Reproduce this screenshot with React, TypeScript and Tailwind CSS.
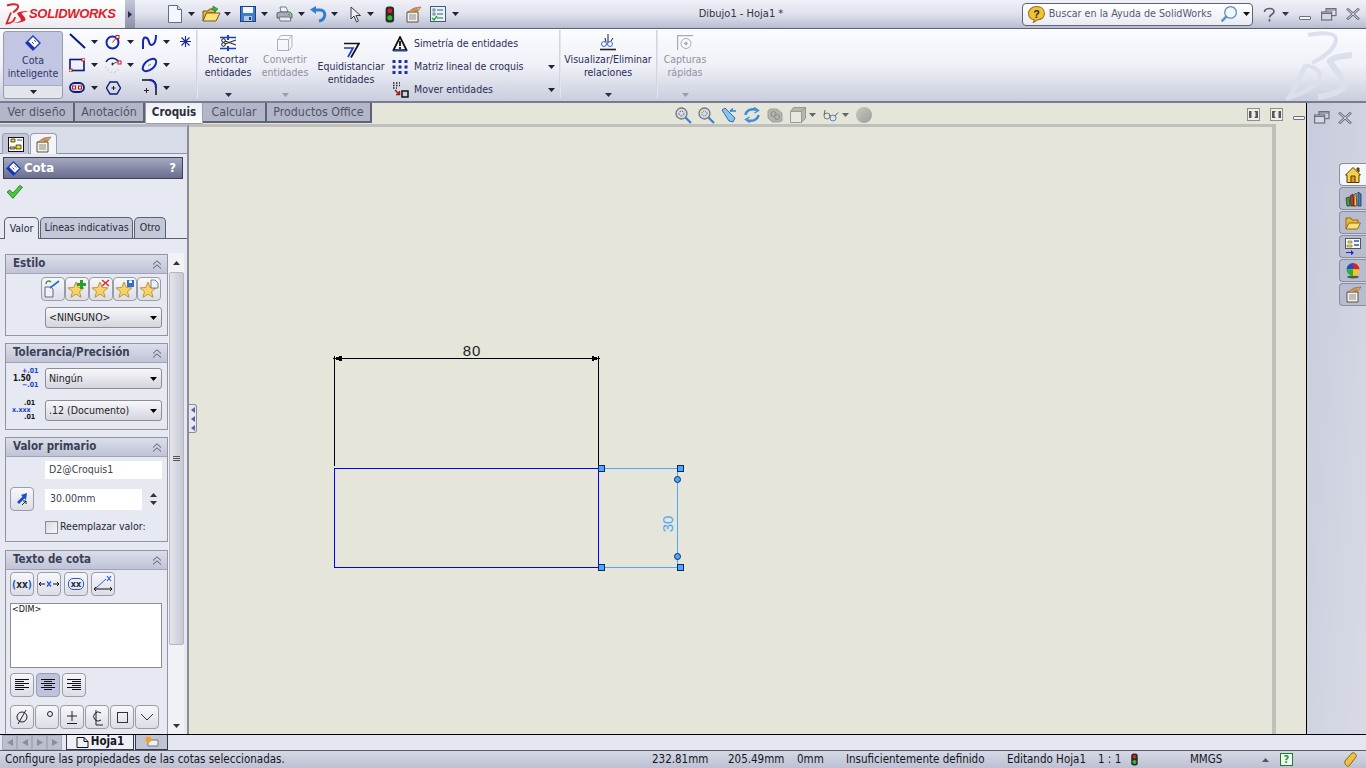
import React from 'react';

const Caret = ({ color = '#1f2333', className = '' }: { color?: string; className?: string }) => (
    <svg width="7" height="4" viewBox="0 0 7 4" className={className}>
        <path d="M0 0h7L3.5 4z" fill={color} />
    </svg>
);

const Logo3DS = () => (
    <svg width="26" height="22" viewBox="0 0 26 22" fill="none" stroke="#d8232a" strokeWidth="2">
        <path d="M4 2.5c5-1.700 10-1.700 11 0 1 1.500-1 4.500-5 7" />
        <path d="M8 9.5 3.500 20.500c5 0 8-2 8.500-6.500" strokeWidth="1.800" />
        <path d="M14 10c3-1.500 10-2.500 11-1.500-2 .2-6 1-6.500 2 1 1.500 4 4 4 6 0 2.500-9 4-14 3.500 4 0 9.500-1.500 9.500-3 0-1.500-3-4-4-7z" fill="#d8232a" stroke="none" />
    </svg>
);

const DocNew = () => (
    <svg width="16" height="18" viewBox="0 0 16 18">
        <path d="M1.5.5h9l4 4v13h-13z" fill="#f4f8fd" stroke="#5b7088" />
        <path d="M10.5.5v4h4" fill="#cfdcea" stroke="#5b7088" />
    </svg>
);
const FolderOpen = () => (
    <svg width="19" height="18" viewBox="0 0 19 18">
        <path d="M1 6h5l1.500-2H13v4H5L1 16z" fill="#e0b840" stroke="#7a5b10" />
        <path d="M1 16l3.500-8H18l-4 8z" fill="#fbe27b" stroke="#7a5b10" />
        <path d="M11 1l5 3-3 3V5h-3V3h1z" fill="#37b34a" stroke="#1d7a2b" strokeWidth=".6" />
    </svg>
);
const Save = () => (
    <svg width="16" height="16" viewBox="0 0 16 16">
        <rect x=".5" y=".5" width="15" height="15" fill="#3f7fc8" stroke="#1d3f86" />
        <rect x="3" y="1" width="10" height="6" fill="#f3f6fb" />
        <rect x="4" y="10" width="8" height="5" fill="#b9c8dc" />
        <rect x="9" y="11" width="2" height="3" fill="#1d3f86" />
    </svg>
);
const Printer = () => (
    <svg width="17" height="16" viewBox="0 0 17 16">
        <path d="M4 1h6l2 5H5z" fill="#f4f5f7" stroke="#5c6470" strokeWidth=".8" />
        <path d="M1 7l3-1h10l2 2v4H1z" fill="#a6adb8" stroke="#4a5058" strokeWidth=".8" />
        <path d="M3 11h11l1 4H4z" fill="#e8eaee" stroke="#5c6470" strokeWidth=".8" />
        <rect x="12" y="8" width="2" height="1.5" fill="#3c4" />
    </svg>
);
const Undo = () => (
    <svg width="18" height="17" viewBox="0 0 18 17" fill="none">
        <path d="M5 4h6c7 0 6 10-1 11" stroke="#2f7fd0" strokeWidth="3" />
        <path d="M1 3.5 7 0v8z" fill="#2f7fd0" />
    </svg>
);
const Pointer = () => (
    <svg width="12" height="17" viewBox="0 0 12 17">
        <path d="M1 1v12l3-3 2.500 6 2-1-2.500-5.500h4.500z" fill="#eceef4" stroke="#3a3f4a" />
    </svg>
);
const Light = ({ h = 16 }: { h?: number }) => (
    <svg width={(h * 11) / 16} height={h} viewBox="0 0 11 16">
        <rect x="1.5" y=".5" width="8" height="15" rx="3" fill="#2b2b2b" />
        <circle cx="5.5" cy="4.5" r="2.2" fill="#e02020" />
        <circle cx="5.5" cy="11" r="2.4" fill="#28c030" />
    </svg>
);
const Options = () => (
    <svg width="17" height="17" viewBox="0 0 17 17">
        <path d="M2 6h11v10H2z" fill="#f6f2e6" stroke="#55524a" />
        <path d="M4 9h7M4 11h7M4 13h7" stroke="#888" />
        <path d="M3 6l6-4 7-1-3 4-5 1z" fill="#e4a868" stroke="#8a5a2a" strokeWidth=".6" />
        <path d="M6 4l6-1.500M8 5l5-1" stroke="#a56c34" strokeWidth=".6" />
    </svg>
);
const Checklist = () => (
    <svg width="16" height="16" viewBox="0 0 16 16">
        <rect x=".5" y=".5" width="15" height="15" fill="#e8f2f4" stroke="#3f5d78" />
        <path d="M7 4h6M7 8h6M7 12h6" stroke="#3f5d78" />
        <rect x="3" y="3" width="2" height="2" fill="none" stroke="#3f5d78" strokeWidth=".7" />
        <rect x="3" y="7" width="2" height="2" fill="none" stroke="#3f5d78" strokeWidth=".7" />
        <path d="M2 12l2 2 3-4" fill="none" stroke="#20a030" strokeWidth="1.3" />
    </svg>
);

const RedDot = ({ x, y }: { x: number; y: number }) => <rect x={x} y={y} width="3" height="3" fill="#fff" stroke="#c01818" />;

const T = { blue: '#1426b4' };

const LineTool = () => (
    <svg width="17" height="17" viewBox="0 0 17 17"><path d="M1 1l15 14" stroke="#0a1a78" strokeWidth="2" /></svg>
);
const CircleTool = () => (
    <svg width="16" height="16" viewBox="0 0 16 16" fill="none">
        <circle cx="7.5" cy="8.5" r="6" stroke={T.blue} strokeWidth="2" />
        <path d="M7.5 8.5 12 3" stroke="#c01818" />
        <RedDot x={11} y={1.5} />
    </svg>
);
const SplineTool = () => (
    <svg width="17" height="16" viewBox="0 0 17 16" fill="none">
        <path d="M2 15V8c0-7 5-5 6 0s7 4 7-7" stroke={T.blue} strokeWidth="2" />
    </svg>
);
const RectTool = () => (
    <svg width="16" height="14" viewBox="0 0 16 14" fill="none">
        <rect x="1" y="1.5" width="14" height="11" stroke="#0a1a78" strokeWidth="1.6" />
        <RedDot x={13} y={0} />
        <RedDot x={0} y={11} />
    </svg>
);
const ArcTool = () => (
    <svg width="17" height="16" viewBox="0 0 17 16" fill="none">
        <path d="M1 5c3-5 9-5 13 0" stroke="#0a1a78" strokeWidth="1.4" />
        <path d="M1 10l.1.1M3 13l.1.1M6 15l.1.1M10 15l.1.1M13 13l.1.1" stroke="#000" strokeWidth="1.5" />
        <path d="M6 7h3M7.5 5.500v3M7.5 7 12 5" stroke="#222" strokeWidth=".8" />
        <RedDot x={13} y={4} />
    </svg>
);
const EllipseTool = () => (
    <svg width="17" height="16" viewBox="0 0 17 16" fill="none">
        <ellipse cx="8.5" cy="8" rx="8" ry="4.5" transform="rotate(-40 8.5 8)" stroke={T.blue} strokeWidth="2" />
        <path d="M7 9l3-2" stroke="#888" />
    </svg>
);
const SlotTool = () => (
    <svg width="16" height="11" viewBox="0 0 16 11" fill="none">
        <rect x="1" y="1" width="14" height="9" rx="4.5" stroke="#0a1a78" strokeWidth="1.8" />
        <RedDot x={3.5} y={4} />
        <RedDot x={9.5} y={4} />
    </svg>
);
const PolyTool = () => (
    <svg width="15" height="14" viewBox="0 0 15 14" fill="none">
        <path d="M4 1h7l3.500 6L11 13H4L.5 7z" stroke="#0a1a78" strokeWidth="1.4" />
        <path d="M5.5 7h4M7.5 5v4" stroke="#222" />
    </svg>
);
const FilletTool = () => (
    <svg width="17" height="17" viewBox="0 0 17 17" fill="none">
        <path d="M1 1h8c4 0 6 3 6 7v8" stroke="#111" strokeWidth="1.5" />
        <path d="M8 1c4 0 7 3 7 8" stroke={T.blue} strokeWidth="2" />
        <path d="M3 11.5h5M5.5 9v5" stroke="#222" />
    </svg>
);
const StarTool = () => (
    <svg width="11" height="11" viewBox="0 0 11 11" stroke={T.blue} strokeWidth="1.1">
        <path d="M5.5 0v11M0 5.500h11M1.5 1.500l8 8M9.5 1.500l-8 8" />
    </svg>
);

const SmartDim = ({ s = 16 }: { s?: number }) => (
    <svg width={s} height={s} viewBox="0 0 16 16">
        <path d="M8 1l7 7-7 7-7-7z" fill="#fff" stroke="#1a3fc8" strokeWidth="1.4" />
        <path d="M1 8l7 7 2-2-7-7z" fill="#1a2fb8" />
        <path d="M7 7l2 2M9 5l2 2" stroke="#333" strokeWidth=".8" />
    </svg>
);
const Trim = () => (
    <svg width="17" height="16" viewBox="0 0 17 16" fill="none">
        <path d="M8 0v5M8 11v5" stroke="#1a3fc8" strokeWidth="2" />
        <path d="M0 2.5h16M0 13.500h16" stroke="#1a3fc8" strokeWidth="1.4" />
        <path d="M16 5 5 9M16 10 5 6" stroke="#333" strokeWidth="1.2" />
        <circle cx="3.5" cy="5.5" r="1.8" stroke="#111" />
        <circle cx="3.5" cy="9.5" r="1.8" stroke="#111" />
    </svg>
);
const Convert = () => (
    <svg width="16" height="16" viewBox="0 0 16 16" fill="none" stroke="#aeb1bb">
        <path d="M.5 4.500 4 .5h11v11l-3 4H.5zM.5 4.500h11v11M11.500 4.500l3.500-4" />
    </svg>
);
const Offset = () => (
    <svg width="17" height="17" viewBox="0 0 17 17" fill="none">
        <path d="M1 1.5h15l-8 14" stroke="#111" strokeWidth="1.7" />
        <path d="M1 6h9l-5 9" stroke="#1a3fc8" strokeWidth="1.7" />
    </svg>
);
const Mirror = () => (
    <svg width="16" height="16" viewBox="0 0 16 16">
        <path d="M8 1l6.500 13h-13z" fill="#f5f5f5" stroke="#111" strokeWidth="1.7" />
        <path d="M8 5v5M8 11v2" stroke="#111" strokeWidth="1.8" />
        <path d="M1 15h14" stroke="#1a3fc8" strokeWidth="1" />
    </svg>
);
const Pattern = () => (
    <svg width="16" height="16" viewBox="0 0 16 16" fill="#1a2fa8">
        {[1, 6.5, 12].map(y => [0.5, 6.5, 12.5].map(x => <rect key={`${x}-${y}`} x={x} y={y} width="3" height="3" />))}
    </svg>
);
const MoveEnt = () => (
    <svg width="17" height="16" viewBox="0 0 17 16" fill="none">
        <path d="M1 1h7M1 3.500h7M1 6h4" stroke="#222" strokeWidth="1.3" strokeDasharray="1.5 1.5" />
        <path d="M3 8l4 4M4 12.500h3.500V9" stroke="#a01818" strokeWidth="1.5" />
        <rect x="10" y="9" width="6" height="6" stroke="#111" strokeWidth="1.5" />
    </svg>
);
const Relations = () => (
    <svg width="16" height="17" viewBox="0 0 16 17" fill="none" stroke="#222">
        <path d="M0 15.500h16" strokeWidth="1.6" />
        <path d="M8 0v9M5 4l1 4M13 4l-2 3" />
        <circle cx="4" cy="10" r="2.5" stroke="#3a6bd0" />
        <circle cx="10" cy="10" r="2.5" stroke="#3a6bd0" />
    </svg>
);
const Snapshot = () => (
    <svg width="16" height="16" viewBox="0 0 16 16" fill="none" stroke="#a8abb5">
        <path d="M.5 15V.5H16" strokeWidth="1.4" />
        <circle cx="9" cy="8.5" r="5" />
        <circle cx="9" cy="8.5" r="1.3" fill="#a8abb5" />
    </svg>
);

const ToolCell = ({ icon, wide = true }: { icon: React.ReactNode; wide?: boolean }) => (
    <div className="flex items-center w-[36px] h-[23px]">
        <div className="w-[18px] flex justify-center">{icon}</div>
        {wide && <Caret className="ml-[5px]" />}
    </div>
);

const BigButton = ({ icon, lines, w, disabled, ml }: { icon: React.ReactNode; lines: string[]; w: string; disabled?: boolean; ml: string }) => (
    <div className={`${w} ${ml} flex flex-col items-center h-[70px] pt-[5px] ${disabled ? 'text-[#8f929e]' : 'text-[#2a2f55]'}`}>
        <div className="h-[17px] flex items-center">{icon}</div>
        <div className="mt-[2px] text-center leading-[13px]">
            {lines.map(l => <div key={l} className="whitespace-nowrap">{l}</div>)}
        </div>
        <Caret className="mt-auto mb-[2px]" color={disabled ? '#9a9ca8' : '#2b2f48'} />
    </div>
);

const Sep = ({ ml }: { ml: string }) => <div className={`${ml} w-[2px] h-[68px] mt-[1px] bg-[#e3e5ee] border-l border-[#d3d6e2]`} />;

const ListRow = ({ icon, label, caret }: { icon: React.ReactNode; label: string; caret?: boolean }) => (
    <div className="flex items-center h-[23px] text-[#2a2f55]">
        <div className="w-[18px] flex justify-center">{icon}</div>
        <span className="ml-[5px] whitespace-nowrap">{label}</span>
        {caret && <Caret className="ml-auto mr-[2px]" />}
    </div>
);

const WinMin = () => <div className="w-[12px] h-[4px] mt-[8px] border border-[#6c7080] bg-[#f2f3f7] rounded-[1px]" />;
const WinRestore = () => (
    <svg width="16" height="13" viewBox="0 0 16 13" fill="none" stroke="#6c7080" strokeWidth="1.2">
        <rect x="5" y=".6" width="10" height="7" />
        <rect x=".6" y="4" width="10" height="8" fill="#d5d8e4" />
        <path d="M.6 5.500h10M5 2h10" />
    </svg>
);
const WinClose = () => (
    <svg width="14" height="12" viewBox="0 0 14 12" fill="none">
        <path d="M1 .5 13 11.500M13 .5 1 11.500" stroke="#6c7080" strokeWidth="2.6" />
        <path d="M1.500 1 12.500 11M12.500 1 1.500 11" stroke="#f2f3f7" strokeWidth=".8" />
    </svg>
);

const TitleBar = () => (
    <div className="h-[29px] shrink-0 flex items-center border-b border-[#5d6478] bg-gradient-to-b from-[#f0f1f8] via-[#dfe1ec] to-[#b9bdd0]">
        <div className="w-[125px] h-full bg-gradient-to-b from-white to-[#ecebf0] flex items-center pl-[3px]">
            <Logo3DS />
            <span className="text-[#d8232a] text-[13px] font-black italic tracking-[-0.3px] font-['Liberation_Sans',sans-serif]">SOLIDWORKS</span>
        </div>
        <div className="w-[10px] h-full bg-gradient-to-b from-[#c5c8da] to-[#8d90a8] flex items-center justify-center">
            <svg width="4" height="7" viewBox="0 0 4 7"><path d="M0 0l4 3.5L0 7z" fill="#222c50" /></svg>
        </div>
        <div className="flex items-center ml-[32px]"><DocNew /><Caret className="ml-[5px]" /></div>
        <div className="flex items-center ml-[7px]"><FolderOpen /><Caret className="ml-[3px]" /></div>
        <div className="flex items-center ml-[9px]"><Save /><Caret className="ml-[5px]" /></div>
        <div className="flex items-center ml-[8px]"><Printer /><Caret className="ml-[5px]" /></div>
        <div className="flex items-center ml-[4px]"><Undo /><Caret className="ml-[4px]" /></div>
        <div className="flex items-center ml-[12px]"><Pointer /><Caret className="ml-[5px]" /></div>
        <div className="ml-[10px]"><Light h={17} /></div>
        <div className="ml-[9px]"><Options /></div>
        <div className="ml-[8px]"><Checklist /></div>
        <Caret className="ml-[6px]" />
        <div className="ml-[240px] w-[84px] text-[11px] text-[#2f3342] whitespace-nowrap">Dibujo1 - Hoja1 *</div>
        <div className="ml-[239px] w-[231px] h-[23px] rounded-[4px] border border-[#5d6478] bg-gradient-to-b from-white to-[#e9ebf3] flex items-center pl-[5px]">
            <svg width="17" height="17" viewBox="0 0 16 16">
                <path d="M8 .5c4.500 0 7.500 2.500 7.500 6.500S12 13 9 13l-4 2.500L6 13C3 12.500.5 10.500.5 7S3.500.5 8 .5z" fill="#f2c236" stroke="#9a7414" />
                <text x="8" y="11" textAnchor="middle" fontSize="10" fontWeight="700" fill="#222" fontFamily="Liberation Sans">?</text>
            </svg>
            <span className="ml-[4px] text-[10.7px] text-[#555a70] whitespace-nowrap">Buscar en la Ayuda de SolidWorks</span>
            <svg width="18" height="18" viewBox="0 0 17 17" fill="none" className="ml-auto">
                <circle cx="10" cy="7" r="5.5" fill="#f2f7fc" stroke="#5e8fbe" strokeWidth="1.2" />
                <path d="M6 11 1.500 15.500" stroke="#5e8fbe" strokeWidth="2.2" />
            </svg>
            <Caret className="ml-[5px] mr-[2px]" color="#111" />
        </div>
        <svg width="13" height="15" viewBox="0 0 13 15" fill="none" stroke="#5a5f6e" strokeWidth="1.6" className="ml-[10px]">
            <path d="M1.500 5C1.500 1 11 0 11 4.500c0 3-4.500 3-4.500 6M6.500 12v2.500" />
        </svg>
        <Caret className="ml-[6px]" color="#2d3558" />
        <div className="ml-[10px]"><WinMin /></div>
        <div className="ml-[10px]"><WinRestore /></div>
        <div className="ml-[9px]"><WinClose /></div>
    </div>
);

const Ribbon = () => (
    <div className="relative h-[74px] shrink-0 flex bg-gradient-to-b from-[#fbfcff] via-[#f0f1f8] to-[#c9cddd] border-b-[2px] border-[#777c8e] overflow-hidden text-[10.5px]">
        <div className="ml-[3px] mt-[2px] w-[60px] h-[68px] rounded-[3px] border border-[#9a9cae] flex flex-col bg-[#c3c6e2]">
            <div className="flex-1 flex flex-col items-center pt-[3px] text-[#2e3466] leading-[13px] text-center">
                <SmartDim />
                <div className="mt-[3px]">Cota<br />inteligente</div>
            </div>
            <div className="h-[13px] bg-[#e3e4ec] flex items-center justify-center rounded-b-[3px] border-t border-[#a9abc0]"><Caret /></div>
        </div>
        <div className="ml-[5px] mt-[1px] grid grid-cols-3 w-[108px] h-[69px]">
            <ToolCell icon={<LineTool />} />
            <ToolCell icon={<CircleTool />} />
            <ToolCell icon={<SplineTool />} />
            <ToolCell icon={<RectTool />} />
            <ToolCell icon={<ArcTool />} />
            <ToolCell icon={<EllipseTool />} />
            <ToolCell icon={<SlotTool />} />
            <ToolCell icon={<PolyTool />} wide={false} />
            <ToolCell icon={<FilletTool />} />
        </div>
        <div className="mt-[7px] ml-[4px]"><StarTool /></div>
        <Sep ml="ml-[5px]" />
        <BigButton icon={<Trim />} lines={['Recortar', 'entidades']} w="w-[50px]" ml="ml-[5px]" />
        <BigButton icon={<Convert />} lines={['Convertir', 'entidades']} w="w-[50px]" ml="ml-[7px]" disabled />
        <div className="ml-[8px] w-[66px] flex flex-col items-center pt-[13px] text-[#2a2f55] leading-[13px] text-center">
            <Offset />
            <div className="mt-[1px] whitespace-nowrap">Equidistanciar<br />entidades</div>
        </div>
        <div className="ml-[7px] mt-[3px] w-[166px] h-[69px]">
            <ListRow icon={<Mirror />} label="Simetría de entidades" />
            <ListRow icon={<Pattern />} label="Matriz lineal de croquis" caret />
            <ListRow icon={<MoveEnt />} label="Mover entidades" caret />
        </div>
        <Sep ml="ml-[2px]" />
        <BigButton icon={<Relations />} lines={['Visualizar/Eliminar', 'relaciones']} w="w-[86px]" ml="ml-[4px]" />
        <Sep ml="ml-[5px]" />
        <BigButton icon={<Snapshot />} lines={['Capturas', 'rápidas']} w="w-[46px]" ml="ml-[4px]" disabled />
        {/* watermark */}
        <svg width="72" height="70" viewBox="0 0 72 70" fill="none" stroke="#dbe0ec" className="absolute right-[10px] top-[2px]">
            <path d="M24 4c16-3 28-2 28 4 0 8-10 17-24 24" strokeWidth="4" />
            <path d="M22 34c5 2 12 3 14 9 1 8-10 17-34 25" strokeWidth="4" />
            <path d="M22 34 6 66" strokeWidth="5" />
            <path d="M68 24c-10 1-20 3-22 6 2 6 14 16 14 24 0 6-14 10-26 12" strokeWidth="6" />
        </svg>
    </div>
);

const RibbonTab = ({ label, active, w }: { label: string; active?: boolean; w: string }) => (
    <div className={`${w} flex items-center justify-center ${active ? 'h-[21px] font-bold text-[#2a2d3a] bg-gradient-to-b from-[#eceef5] to-white border-x border-b border-[#9a9eae] rounded-b-[2px]' : 'h-[20px] text-[12.3px] text-[#4e5264] bg-[#b3b6c8] border-r-[2px] border-b-[2px] border-[#5d6274]'}`}>{label}</div>
);

const ViewIcon = ({ children, ml }: { children: React.ReactNode; ml: string }) => <div className={`${ml} flex items-center`}>{children}</div>;

const Magnifier = ({ dashed }: { dashed?: boolean }) => (
    <svg width="17" height="17" viewBox="0 0 17 17" fill="none">
        <circle cx="6.5" cy="6.5" r="5.5" fill="#d8dce2" stroke="#70757e" strokeWidth="1.3" />
        <circle cx="6.5" cy="6.5" r="2.5" stroke="#666" strokeDasharray={dashed ? '1 1' : '2 1'} />
        <path d="M10.500 10.500 16 16" stroke="#3f7fc8" strokeWidth="2.2" />
    </svg>
);

const TabBar = () => (
    <div className="h-[21px] shrink-0 flex bg-[#e5e5d9]">
        <RibbonTab label="Ver diseño" w="w-[75px]" />
        <RibbonTab label="Anotación" w="w-[70px]" />
        <RibbonTab label="Croquis" active w="w-[58px]" />
        <RibbonTab label="Calcular" w="w-[64px]" />
        <RibbonTab label="Productos Office" w="w-[105px]" />
        <div className="flex items-center h-[21px] pt-[3px]">
            <ViewIcon ml="ml-[303px]"><Magnifier /></ViewIcon>
            <ViewIcon ml="ml-[6px]"><Magnifier dashed /></ViewIcon>
            <ViewIcon ml="ml-[6px]">
                <svg width="16" height="16" viewBox="0 0 16 16" fill="none">
                    <path d="M1 3l3-2 10 10-2 4-4-1z" fill="#8ac4ee" stroke="#2f6fb0" />
                    <path d="M9 4h6M9 4l3-2.500" stroke="#2f7fd0" strokeWidth="1.5" />
                </svg>
            </ViewIcon>
            <ViewIcon ml="ml-[7px]">
                <svg width="16" height="16" viewBox="0 0 16 16" fill="none" stroke="#3f8bd8" strokeWidth="2.4">
                    <path d="M1.500 8C2 3 8 1 13 3M14.500 8C14 13 8 15 3 13" />
                    <path d="M10 .5l4.500 3-4 2.500M6 15.500l-4.500-3 4-2.500" strokeWidth="1.4" />
                </svg>
            </ViewIcon>
            <ViewIcon ml="ml-[7px]">
                <svg width="16" height="16" viewBox="0 0 16 16" fill="#b2b3ad" stroke="#a2a3a0">
                    <path d="M3 2h7l5 4v8l-3 1H5L1 11V4z" />
                    <circle cx="6.5" cy="7" r="2.5" fill="none" stroke="#8d8e8a" />
                    <circle cx="10" cy="10" r="2.5" fill="none" stroke="#8d8e8a" />
                </svg>
            </ViewIcon>
            <ViewIcon ml="ml-[7px]">
                <svg width="16" height="16" viewBox="0 0 16 16" stroke="#9a9b96">
                    <path d="M.5 4.500h11v11H.5z" fill="#e9e9e2" />
                    <path d="M.5 4.500l3-4h12l-4 4zM11.500 4.500l4-4v11l-4 4z" fill="#b5b6b0" />
                </svg>
                <Caret className="ml-[3px]" color="#666" />
            </ViewIcon>
            <ViewIcon ml="ml-[7px]">
                <svg width="17" height="13" viewBox="0 0 17 13" fill="none">
                    <circle cx="4" cy="7" r="3" stroke="#777" />
                    <circle cx="10" cy="9" r="3" stroke="#4a86c8" />
                    <path d="M6 6.500l2 .8M1 6l1-5M12 7l3-3.500" stroke="#666" />
                </svg>
                <Caret className="ml-[2px]" color="#666" />
            </ViewIcon>
            <ViewIcon ml="ml-[7px]">
                <div className="w-[16px] h-[16px] rounded-full bg-gradient-to-br from-[#c9c9c3] to-[#9d9d98]" />
            </ViewIcon>
        </div>
        <div className="flex items-center ml-auto pt-[1px]">
            {['l', 'r'].map((d, i) => (
                <div key={d} className={`w-[13px] h-[13px] border border-[#8f8f8d] bg-[#eeeee6] flex items-center justify-center ${i ? 'ml-[10px]' : ''}`}>
                    <svg width="9" height="7" viewBox="0 0 9 7" fill="#55565a">
                        {d === 'l' ? <path d="M0 0h2.500v7H0zM5 0h4v7H5l1.500-1.500V1.500z" /> : <path d="M0 0h4L2.500 1.500v4L4 7H0zM6.500 0H9v7H6.500z" />}
                    </svg>
                </div>
            ))}
            <div className="ml-[10px] mr-[1px]"><WinMin /></div>
        </div>
    </div>
);

const Btn = ({ children, active, className = '' }: { children: React.ReactNode; active?: boolean; className?: string }) => (
    <div className={`w-[24px] h-[24px] shrink-0 rounded-[4px] border border-[#9a9ca6] flex items-center justify-center ${active ? 'bg-[#bfc2de]' : 'bg-gradient-to-b from-[#f7f7fb] to-[#dcdde6]'} ${className}`}>{children}</div>
);

const Sel = ({ label, className = '' }: { label: string; className?: string }) => (
    <div className={`w-[117px] h-[21px] rounded-[3px] border border-[#8c8e96] bg-gradient-to-b from-[#f8f8fb] to-[#d4d5de] flex items-center pl-[3px] text-[#1c1c24] ${className}`}>
        <span>{label}</span>
        <Caret className="ml-auto mr-[4px]" color="#000" />
    </div>
);

const Group = ({ title, h, mt, children }: { title: string; h: string; mt: string; children: React.ReactNode }) => (
    <div className={`${h} ${mt} shrink-0 border border-[#92959f] bg-[#e6e8f2]`}>
        <div className="h-[19px] flex items-center pl-[7px] pr-[5px] bg-gradient-to-b from-[#dcdeea] to-[#bfc3d6] border-b border-[#a0a4b4] text-[11.5px] text-[#3a4058] font-bold">
            <span>{title}</span>
            <svg width="10" height="9" viewBox="0 0 10 9" fill="none" stroke="#555a68" className="ml-auto">
                <path d="M1 4.500 5 .8l4 3.700M1 8.500 5 4.800l4 3.700" />
            </svg>
        </div>
        {children}
    </div>
);

const Star = ({ badge }: { badge?: React.ReactNode }) => (
    <svg width="20" height="20" viewBox="0 0 20 20">
        <path d="M9 3l2.200 5.500 5.800.4-4.500 3.700 1.500 5.700L9 15.200l-5 3.100 1.500-5.700L1 8.900l5.800-.4z" fill="#f6d368" stroke="#b89030" strokeWidth=".9" />
        {badge}
    </svg>
);

const GraphicsTab = ({ active, children }: { active?: boolean; children: React.ReactNode }) => (
    <div className={`w-[27px] h-[21px] rounded-t-[4px] border border-b-0 border-[#9a9eae] flex items-center justify-center ${active ? 'bg-[#f3f4f9]' : 'bg-[#c4c7d8]'}`}>{children}</div>
);

const FeatureIcon = () => (
    <svg width="16" height="15" viewBox="0 0 16 15">
        <rect x=".5" y=".5" width="15" height="14" fill="#fdfdfa" stroke="#111" />
        <path d="M3 2h4v3H3zM8 8h5v4H8z" fill="#f2d82a" stroke="#111" strokeWidth=".7" />
        <path d="M2 10h5v2H2zM9 3h5" stroke="#111" fill="#f2d82a" strokeWidth=".7" />
    </svg>
);

const Panel = () => (
    <div className="relative w-[189px] shrink-0 flex flex-col border-r-[2px] border-[#8a8d98] border-t-[3px] border-t-[#b6b9c6] bg-[#e6e8f2] overflow-hidden text-[10.5px]">
        <div className="h-[27px] shrink-0 pt-[6px] pl-[2px] flex gap-[1px] border-b border-[#8f93a5] bg-[#d8dbe8]">
            <GraphicsTab><FeatureIcon /></GraphicsTab>
            <GraphicsTab active><Options /></GraphicsTab>
        </div>
        <div className="mt-[3px] ml-[3px] w-[180px] h-[22px] shrink-0 flex items-center pl-[2px] pr-[6px] border border-[#3c4058] bg-gradient-to-b from-[#a5a8bf] to-[#6a6e8e] text-white font-bold text-[13px]">
            <SmartDim s={15} />
            <span className="ml-[3px]">Cota</span>
            <span className="ml-auto">?</span>
        </div>
        <svg width="17" height="16" viewBox="0 0 16 14" className="ml-[6px] mt-[5px] shrink-0">
            <path d="M1 7l2.500-2 3 3L13 .8l2.500 1.700L6.500 13z" fill="#48c83c" stroke="#1f7a20" strokeWidth=".8" />
        </svg>
        <div className="mt-[17px] h-[22px] shrink-0 flex items-end pl-[4px] border-b border-[#5a5f72]">
            <div className="w-[35px] h-[22px] -mb-[1px] rounded-t-[5px] border border-b-0 border-[#5a5f72] bg-[#e6e8f2] flex items-center justify-center text-[#252838]">Valor</div>
            <div className="ml-[1px] w-[93px] h-[21px] rounded-t-[5px] border border-b-0 border-[#5a5f72] bg-[#c5c8d9] flex items-center justify-center text-[#252838] whitespace-nowrap">Líneas indicativas</div>
            <div className="ml-[1px] w-[32px] h-[21px] rounded-t-[5px] border border-b-0 border-[#5a5f72] bg-[#c5c8d9] flex items-center justify-center text-[#252838]">Otro</div>
        </div>
        <div className="mt-[14px] flex-1 min-h-0 flex overflow-hidden">
            <div className="ml-[5px] w-[163px] flex flex-col text-[#252838]">
                <Group title="Estilo" h="h-[82px]" mt="mt-[1px]">
                    <div className="flex gap-0 pl-[35px] pt-[3px]">
                        <Btn>
                            <svg width="20" height="20" viewBox="0 0 20 20" fill="none">
                                <path d="M2 8h6l2 2v8H2z" fill="#eef1f6" stroke="#667" />
                                <path d="M7 9l9-7" stroke="#2a6fd0" strokeWidth="1.6" />
                                <path d="M3 5c0-3 3-4 5-2" stroke="#2a9a40" strokeWidth="1.4" />
                            </svg>
                        </Btn>
                        <Btn><Star badge={<path d="M13 1h3v3h3v3h-3v3h-3V7h-3V4h3z" fill="#28a030" />} /></Btn>
                        <Btn><Star badge={<path d="M11 1l7 6M18 1l-7 6" stroke="#d03030" strokeWidth="1.5" />} /></Btn>
                        <Btn><Star badge={<g><rect x="12" y="1" width="7" height="7" fill="#2f6fd0" /><rect x="14" y="1.5" width="3" height="2.5" fill="#fff" /></g>} /></Btn>
                        <Btn><Star badge={<path d="M12 1h4l3 3v5h-7z" fill="#eef1f6" stroke="#667" strokeWidth=".8" />} /></Btn>
                    </div>
                    <Sel label="<NINGUNO>" className="ml-[39px] mt-[6px]" />
                </Group>
                <Group title="Tolerancia/Precisión" h="h-[87px]" mt="mt-[7px]">
                    <div className="flex items-center mt-[5px] h-[21px]">
                        <div className="w-[39px] relative h-[21px] text-[7px] font-bold leading-[7px]">
                            <span className="absolute left-[16px] top-[0px] text-[#1a3fc8]">+.01</span>
                            <span className="absolute left-[7px] top-[7px] text-[#111] text-[8px]">1.50</span>
                            <span className="absolute left-[16px] top-[14px] text-[#1a3fc8]">−.01</span>
                        </div>
                        <Sel label="Ningún" />
                    </div>
                    <div className="flex items-center mt-[11px] h-[21px]">
                        <div className="w-[39px] relative h-[21px] text-[7px] font-bold leading-[7px]">
                            <span className="absolute left-[18px] top-[0px] text-[#111]">.01</span>
                            <span className="absolute left-[6px] top-[7px] text-[#1a3fc8]">x.xxx</span>
                            <span className="absolute left-[18px] top-[14px] text-[#111]">.01</span>
                        </div>
                        <Sel label=".12 (Documento)" />
                    </div>
                </Group>
                <Group title="Valor primario" h="h-[105px]" mt="mt-[7px]">
                    <div className="ml-[39px] mt-[4px] w-[117px] h-[18px] bg-white flex items-center pl-[4px] text-[#3c3f4c]">D2@Croquis1</div>
                    <div className="flex items-center mt-[9px] h-[22px]">
                        <Btn className="ml-[4px]">
                            <svg width="16" height="16" viewBox="0 0 16 16">
                                <path d="M13 2 7 4l1.500 1.500L3 11l2 2 5.500-5.500L12 9z" fill="#1f50c8" />
                                <path d="M5 15l4-4M6 11h3v3" fill="none" stroke="#111" strokeWidth=".9" transform="translate(3 -1)" />
                            </svg>
                        </Btn>
                        <div className="ml-[11px] w-[97px] h-[21px] bg-white flex items-center pl-[5px] text-[#3c3f4c]">30.00mm</div>
                        <div className="ml-[3px] w-[17px] h-[21px] flex flex-col items-center justify-center gap-[4px]">
                            <Caret className="rotate-180" color="#333" />
                            <Caret color="#333" />
                        </div>
                    </div>
                    <div className="flex items-center mt-[10px] ml-[39px] h-[14px]">
                        <div className="w-[13px] h-[13px] border border-[#8a8c96] bg-gradient-to-br from-[#d8d9e0] to-[#f7f7fa]" />
                        <span className="ml-[2px]">Reemplazar valor:</span>
                    </div>
                </Group>
                <Group title="Texto de cota" h="h-[220px]" mt="mt-[8px]">
                    <div className="flex gap-[3px] ml-[4px] mt-[2px]">
                        <Btn><span className="text-[10px] font-bold"><span className="text-[#2a5ad0]">(</span>xx<span className="text-[#2a5ad0]">)</span></span></Btn>
                        <Btn>
                            <svg width="20" height="10" viewBox="0 0 20 10" fill="none" stroke="#111">
                                <path d="M0 5h6M14 5h6M0 5l2-2M0 5l2 2M20 5l-2-2M20 5l-2 2" />
                                <path d="M8 2.500l4 5M12 2.500l-4 5" stroke="#2a5ad0" strokeWidth="1.3" />
                            </svg>
                        </Btn>
                        <Btn><span className="px-[2px] border border-[#2a5ad0] rounded-[5px] text-[9px] leading-[10px] font-bold">xx</span></Btn>
                        <Btn>
                            <svg width="20" height="18" viewBox="0 0 20 18" fill="none" stroke="#111">
                                <path d="M1 14h18M1 14l2-2M1 14l2 2M19 14l-2-2M19 14l-2 2" />
                                <path d="M3 13 13 4" stroke="#2a5ad0" />
                                <path d="M14 1l4 5M18 1l-4 5" stroke="#2a5ad0" strokeWidth="1.2" />
                            </svg>
                        </Btn>
                    </div>
                    <div className="ml-[4px] mt-[7px] w-[152px] h-[65px] bg-white border border-[#8a8d98] pl-[1px] text-[9px] leading-[11px] text-[#111]">&lt;DIM&gt;</div>
                    <div className="flex gap-[2px] ml-[4px] mt-[5px]">
                        {[0, 1, 2].map(i => (
                            <Btn key={i} active={i === 1}>
                                <svg width="14" height="12" viewBox="0 0 14 12" stroke="#111">
                                    {i === 0 && <path d="M0 .5h14M0 2.500h9M0 4.500h14M0 6.500h9M0 8.500h14M0 10.500h9" />}
                                    {i === 1 && <path d="M0 .5h14M3 2.500h8M0 4.500h14M3 6.500h8M0 8.500h14M3 10.500h8" />}
                                    {i === 2 && <path d="M0 .5h14M5 2.500h9M0 4.500h14M5 6.500h9M0 8.500h14M5 10.500h9" />}
                                </svg>
                            </Btn>
                        ))}
                    </div>
                    <div className="flex gap-[1px] ml-[4px] mt-[8px]">
                        <Btn><svg width="14" height="16" viewBox="0 0 14 16" fill="none" stroke="#222"><circle cx="7" cy="8" r="5" /><path d="M3 15 11 1" /></svg></Btn>
                        <Btn><svg width="14" height="14" viewBox="0 0 14 14" fill="none" stroke="#222"><circle cx="10" cy="4" r="2.5" /></svg></Btn>
                        <Btn><svg width="12" height="15" viewBox="0 0 12 15" stroke="#222"><path d="M1 6h10M6 1v10M1 13.500h10" /></svg></Btn>
                        <Btn><svg width="14" height="17" viewBox="0 0 14 17" fill="none" stroke="#222"><path d="M11 4A4.500 4.500 0 1 0 11 11M6 1v15h7" /></svg></Btn>
                        <Btn><div className="w-[11px] h-[11px] border-[1px] border-[#333]" /></Btn>
                        <Btn><svg width="14" height="8" viewBox="0 0 14 8" fill="none" stroke="#333"><path d="M1 1l6 6 6-6" /></svg></Btn>
                    </div>
                </Group>
            </div>
            <div className="w-[16px] flex flex-col items-center bg-[#f1f2f6]">
                <div className="h-[19px] flex items-center"><Caret className="rotate-180" color="#333" /></div>
                <div className="w-[15px] h-[373px] shrink-0 bg-gradient-to-r from-[#e4e5ec] to-[#c6c8d3] border border-[#b3b5c0] rounded-[2px] flex flex-col items-center justify-center gap-[1px]">
                    <div className="w-[7px] h-[1px] bg-[#555]" />
                    <div className="w-[7px] h-[1px] bg-[#555]" />
                    <div className="w-[7px] h-[1px] bg-[#555]" />
                </div>
                <Caret className="mt-[79px]" color="#333" />
            </div>
        </div>
    </div>
);

const Sketch = () => (
    <svg viewBox="189 124 1117 610" className="absolute inset-0 w-full h-full" fill="none" shapeRendering="crispEdges">
        <path d="M334.5 356v110M598.5 356v112M335 358.5h263" stroke="#000" />
        <path d="M335 358.5l6-2v4zM598 358.5l-6-2v4z" fill="#000" stroke="#000" />
        <text x="472" y="356" textAnchor="middle" fontSize="15" fill="#222" fontFamily="Liberation Sans" letterSpacing="1">80</text>
        <rect x="334.5" y="468.5" width="264" height="99" stroke="#0000ff" />
        <path d="M599 468.5h78.5v99H599" stroke="#4da6ff" />
        <text x="0" y="0" textAnchor="middle" fontSize="15" fill="#4da6ff" fontFamily="Liberation Sans" transform="translate(673 524) rotate(-90)">30</text>
        {[[598.5, 465.5], [677.5, 465.5], [598.5, 564.5], [677.5, 564.5]].map(([x, y]) => (
            <rect key={`${x}${y}`} x={x} y={y} width="6" height="6" fill="#4da6ff" stroke="#0a2a60" />
        ))}
        <g shapeRendering="auto">
            <circle cx="677.5" cy="479.5" r="3" fill="#4da6ff" stroke="#0a2a60" />
            <circle cx="677.5" cy="556.5" r="3" fill="#4da6ff" stroke="#0a2a60" />
        </g>
    </svg>
);

const PaneTab = ({ active, children }: { active?: boolean; children: React.ReactNode }) => (
    <div className={`w-[27px] h-[23px] ml-auto rounded-l-[4px] border border-r-0 border-[#8a8e9e] flex items-center justify-center ${active ? 'bg-[#f6f7fb]' : 'bg-[#b8bccf]'}`}>{children}</div>
);

const TaskPane = () => (
    <div className="w-[60px] shrink-0 border-l border-black bg-gradient-to-br from-[#c7cbdc] to-[#d8dbe6] flex flex-col pl-[7px]">
        <div className="flex items-center h-[28px] pt-[1px] gap-[8px]">
            <WinRestore />
            <WinClose />
        </div>
        <div className="mt-[32px] flex flex-col gap-[1px]">
            <PaneTab active>
                <svg width="16" height="16" viewBox="0 0 16 16" stroke="#5a3a00">
                    <path d="M8 .5 15.5 8H14v7.500H2V8H.5z" fill="#f5d050" />
                    <path d="M6 9h4v6.500H6z" fill="#d9a020" />
                    <path d="M12 1h2v4l-2-2z" fill="#c03020" />
                </svg>
            </PaneTab>
            <PaneTab>
                <svg width="17" height="16" viewBox="0 0 17 16" stroke="#222" strokeWidth=".7">
                    <path d="M1 7l3-1 1 9H2z" fill="#30b030" />
                    <path d="M5 5l3-2 1 12H6z" fill="#d03030" />
                    <path d="M9 4l2-2 1 13H9z" fill="#f0c820" />
                    <path d="M13 1l3 2v12h-3z" fill="#3a80d8" />
                </svg>
            </PaneTab>
            <PaneTab>
                <svg width="16" height="14" viewBox="0 0 16 14" stroke="#9a6a10">
                    <path d="M1 13V2h5l1 2h6v3" fill="#e8b840" />
                    <path d="M1 13l3-6h11.500l-3 6z" fill="#fae07a" />
                </svg>
            </PaneTab>
            <PaneTab>
                <svg width="16" height="17" viewBox="0 0 16 17">
                    <rect x=".5" y=".5" width="15" height="10" fill="#f4f6fa" stroke="#555" />
                    <path d="M3 3h4v2H3zM2 7h5v2H2z" fill="#f2d82a" stroke="#555" strokeWidth=".5" />
                    <path d="M9 3h5M9 7h5" stroke="#35a" strokeWidth="1.5" />
                    <path d="M1 14h5v-2l3 3-3 2v-2H1z" fill="#1426c8" />
                </svg>
            </PaneTab>
            <PaneTab>
                <svg width="16" height="17" viewBox="0 0 16 17">
                    <ellipse cx="8" cy="15" rx="6" ry="1.5" fill="#555" />
                    <path d="M8 7V1a6.500 6.500 0 0 1 6.500 6.500z" fill="#e02020" />
                    <path d="M8 7 1.500 7.500A6.500 6.500 0 0 1 8 1z" fill="#2050c8" />
                    <path d="M8 7.500H1.500A6.500 6.500 0 0 0 8 14z" fill="#28b030" />
                    <path d="M8 7.500h6.500A6.500 6.500 0 0 1 8 14z" fill="#f0c820" />
                </svg>
            </PaneTab>
            <PaneTab><Options /></PaneTab>
        </div>
    </div>
);

const SheetBar = () => (
    <div className="h-[16px] shrink-0 flex items-end border-t border-black bg-[#e4e6f0]">
        <div className="flex ml-[2px] h-[15px] gap-[0px]">
            {[0, 1, 2, 3].map(i => (
                <div key={i} className="w-[15px] h-[15px] bg-[#bcbfce] border border-[#a8abba] flex items-center justify-center">
                    <svg width="6" height="7" viewBox="0 0 6 7"><path d={i < 2 ? 'M6 0v7L0 3.5z' : 'M0 0v7l6-3.5z'} fill="#8b8e9e" /></svg>
                </div>
            ))}
        </div>
        <div className="ml-[4px] w-[68px] h-[15px] bg-[#eef0f6] border-x border-b border-[#33384a] flex items-center justify-center font-bold text-[#15171f]">
            <svg width="13" height="11" viewBox="0 0 13 11" fill="none" stroke="#111" className="mr-[2px]">
                <path d="M1 .5h7l4 4v6H1zM8 .5v4h4" />
            </svg>
            Hoja1
        </div>
        <div className="ml-[1px] w-[33px] h-[15px] bg-[#c1c4d4] border-x border-b border-[#33384a] flex items-center justify-center">
            <svg width="14" height="12" viewBox="0 0 14 12">
                <path d="M3 4h10v6H3z" fill="#eef1f4" stroke="#778" />
                <circle cx="3.5" cy="3.5" r="3" fill="#f5a020" />
            </svg>
        </div>
    </div>
);

const StatusCell = ({ x, children }: { x: string; children: React.ReactNode }) => <span className={`${x} whitespace-nowrap`}>{children}</span>;

const StatusBar = () => (
    <div className="h-[18px] shrink-0 flex items-center border-t border-[#55596a] bg-gradient-to-b from-[#d6d9e5] to-[#bcc0d2] text-[#14161f]">
        <StatusCell x="ml-[5px] w-[647px]">Configure las propiedades de las cotas seleccionadas.</StatusCell>
        <StatusCell x="w-[76px]">232.81mm</StatusCell>
        <StatusCell x="w-[69px]">205.49mm</StatusCell>
        <StatusCell x="w-[49px]">0mm</StatusCell>
        <StatusCell x="w-[161px]">Insuficientemente definido</StatusCell>
        <StatusCell x="w-[91px]">Editando Hoja1</StatusCell>
        <StatusCell x="w-[32px]">1 : 1</StatusCell>
        <Light h={13} />
        <StatusCell x="ml-[51px] w-[72px]">MMGS</StatusCell>
        <Caret className="rotate-180" color="#555" />
        <div className="ml-[11px] w-[13px] h-[13px] border border-[#207a30] bg-[#f0f8f0] flex items-center justify-center text-[#18a030] font-bold text-[11px] leading-none">?</div>
        <svg width="14" height="15" viewBox="0 0 14 15" className="ml-[51px]">
            <path d="M1 9l7-8c3-1 5 2 4 4l-7 9c-2 1-5-2-4-5z" fill="#f0c040" stroke="#8a6a10" />
        </svg>
    </div>
);

const App: React.FC = () => {
    return (
        <div className="w-[1366px] h-[768px] flex flex-col overflow-hidden bg-[#e5e5d9] text-[11.5px] font-['DejaVu_Sans_Condensed','Liberation_Sans',sans-serif]">
            <TitleBar />
            <Ribbon />
            <div className="flex-1 min-h-0 flex">
                <div className="flex-1 min-w-0 flex flex-col">
                    <TabBar />
                    <div className="flex-1 min-h-0 flex">
                        <Panel />
                        <div className="relative flex-1 bg-[#e5e5d9] overflow-hidden">
                            <Sketch />
                            <div className="absolute left-0 top-0 w-[1086px] h-[3px] bg-[#bfbfbb]" />
                            <div className="absolute left-[1083px] top-0 w-[4px] h-full bg-[#bfbfbb]" />
                            {/* sash handle */}
                            <div className="absolute left-0 top-[280px] w-[8px] h-[29px] rounded-r-[3px] border border-l-0 border-[#8a8d98] bg-[#e6e8f2] flex flex-col items-center justify-center gap-[3px]">
                                {[0, 1, 2].map(i => <svg key={i} width="4" height="6" viewBox="0 0 4 6"><path d="M4 0v6L0 3z" fill="#5a5fa8" /></svg>)}
                            </div>
                        </div>
                    </div>
                </div>
                <TaskPane />
            </div>
            <SheetBar />
            <StatusBar />
        </div>
    );
};

export default App;
